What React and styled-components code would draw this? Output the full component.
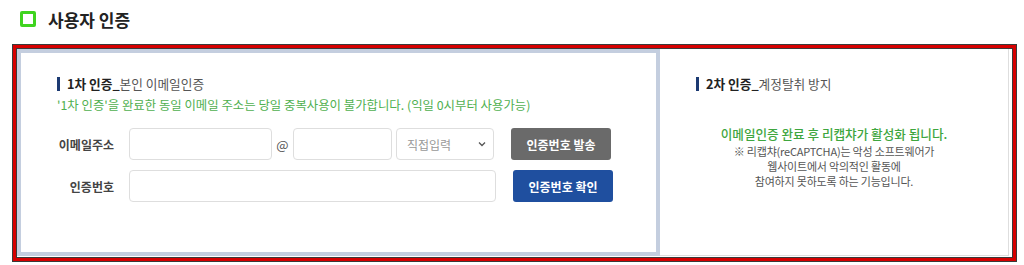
import React from "react";
import styled, { createGlobalStyle } from "styled-components";

const GlobalStyle = createGlobalStyle`
  body {
    margin: 0;
    background: #fff;
    font-family: "Noto Sans CJK KR", "Noto Sans", sans-serif;
    color: #333;
  }
`;

const Page = styled.div`
  width: 1024px;
  height: 265px;
  overflow: hidden;
`;

const Header = styled.h2`
  display: flex;
  align-items: center;
  gap: 12px;
  margin: 0;
  padding: 8px 0 0 20px;
  height: 22px;
  font-size: 17px;
  font-weight: 700;
  color: #222;
`;

const CheckBox = styled.span`
  width: 10px;
  height: 10px;
  border: 3px solid #3fd41f;
  border-radius: 2px;
`;

const Frame = styled.div`
  display: flex;
  margin: 15px 8px 0 13px;
  height: 207px;
  border: 3px solid #d60000;
  outline: 1px solid #3a3a3a;
  box-shadow: inset 0 0 0 1px #3a3a3a;
  padding: 1px 4px 2px 1px;
`;

const LeftPanel = styled.section`
  width: 643px;
  box-sizing: border-box;
  border: 4px solid #c4cedf;
  padding: 23px 0 0 36px;
`;

const RightPanel = styled.section`
  flex: 1;
  box-sizing: border-box;
  border-right: 1px solid #dedede;
  border-bottom: 1px solid #dedede;
  padding: 27px 0 0 36px;
`;

const Title = styled.h3`
  display: flex;
  align-items: center;
  margin: 0;
  font-size: 12.7px;
  line-height: 16px;
  font-weight: 700;
  color: #222;

  &::before {
    content: "";
    width: 3px;
    height: 14px;
    margin-right: 7px;
    background: #1c3a72;
  }

  span {
    font-weight: 400;
    color: #555;
  }
`;

const Note = styled.p`
  margin: 5px 0 0;
  font-size: 12.4px;
  line-height: 16px;
  color: #4fb04f;
`;

const Form = styled.div`
  display: flex;
  flex-direction: column;
  gap: 10px;
  margin-top: 15px;
`;

const Row = styled.div`
  display: flex;
  align-items: center;
  height: 32px;
`;

const Label = styled.label`
  width: 57px;
  margin-right: 15px;
  text-align: right;
  font-size: 12px;
  font-weight: 700;
  color: #444;
`;

const Input = styled.div`
  width: ${(p) => p.$w}px;
  height: 32px;
  box-sizing: border-box;
  border: 1px solid #dedede;
  border-radius: 4px;
  background: #fff;
`;

const At = styled.span`
  width: 21px;
  text-align: center;
  font-size: 13px;
  color: #555;
`;

const Select = styled.div`
  display: flex;
  align-items: center;
  justify-content: space-between;
  width: 98px;
  height: 32px;
  margin-left: 4px;
  padding: 0 6px 0 10px;
  box-sizing: border-box;
  border: 1px solid #dedede;
  border-radius: 4px;
  font-size: 12px;
  color: #999;
`;

const Button = styled.button`
  width: 100px;
  height: 32px;
  margin-left: ${(p) => p.$ml}px;
  border: none;
  border-radius: 3px;
  background: ${(p) => (p.$blue ? "#1f4f9f" : "#6a6a6a")};
  color: #fff;
  font-family: inherit;
  font-size: 12px;
  font-weight: 700;
`;

const Info = styled.div`
  margin: 33px 0 0 -36px;
  text-align: center;
`;

const InfoLead = styled.p`
  margin: 0;
  font-size: 12.6px;
  line-height: 18px;
  font-weight: 500;
  color: #3ea63e;
`;

const InfoText = styled.p`
  margin: 1px 0 0;
  font-size: 11px;
  letter-spacing: -0.2px;
  line-height: 15px;
  color: #555;
`;

const Chevron = () => (
  <svg width="10" height="10" viewBox="0 0 10 10">
    <path d="M2 3.5 L5 6.5 L8 3.5" fill="none" stroke="#555" strokeWidth="1.3" />
  </svg>
);

export default function App() {
  return (
    <Page>
      <GlobalStyle />
      <Header>
        <CheckBox />
        사용자 인증
      </Header>
      <Frame>
        <LeftPanel>
          <Title>
            1차 인증_<span>본인 이메일인증</span>
          </Title>
          <Note>'1차 인증'을 완료한 동일 이메일 주소는 당일 중복사용이 불가합니다. (익일 0시부터 사용가능)</Note>
          <Form>
            <Row>
              <Label>이메일주소</Label>
              <Input $w={143} />
              <At>@</At>
              <Input $w={99} />
              <Select>
                직접입력
                <Chevron />
              </Select>
              <Button $ml={17}>인증번호 발송</Button>
            </Row>
            <Row>
              <Label>인증번호</Label>
              <Input $w={367} />
              <Button $ml={17} $blue>
                인증번호 확인
              </Button>
            </Row>
          </Form>
        </LeftPanel>
        <RightPanel>
          <Title>
            2차 인증_<span>계정탈취 방지</span>
          </Title>
          <Info>
            <InfoLead>이메일인증 완료 후 리캡챠가 활성화 됩니다.</InfoLead>
            <InfoText>
              ※ 리캡챠(reCAPTCHA)는 악성 소프트웨어가
              <br />
              웹사이트에서 악의적인 활동에
              <br />
              참여하지 못하도록 하는 기능입니다.
            </InfoText>
          </Info>
        </RightPanel>
      </Frame>
    </Page>
  );
}
